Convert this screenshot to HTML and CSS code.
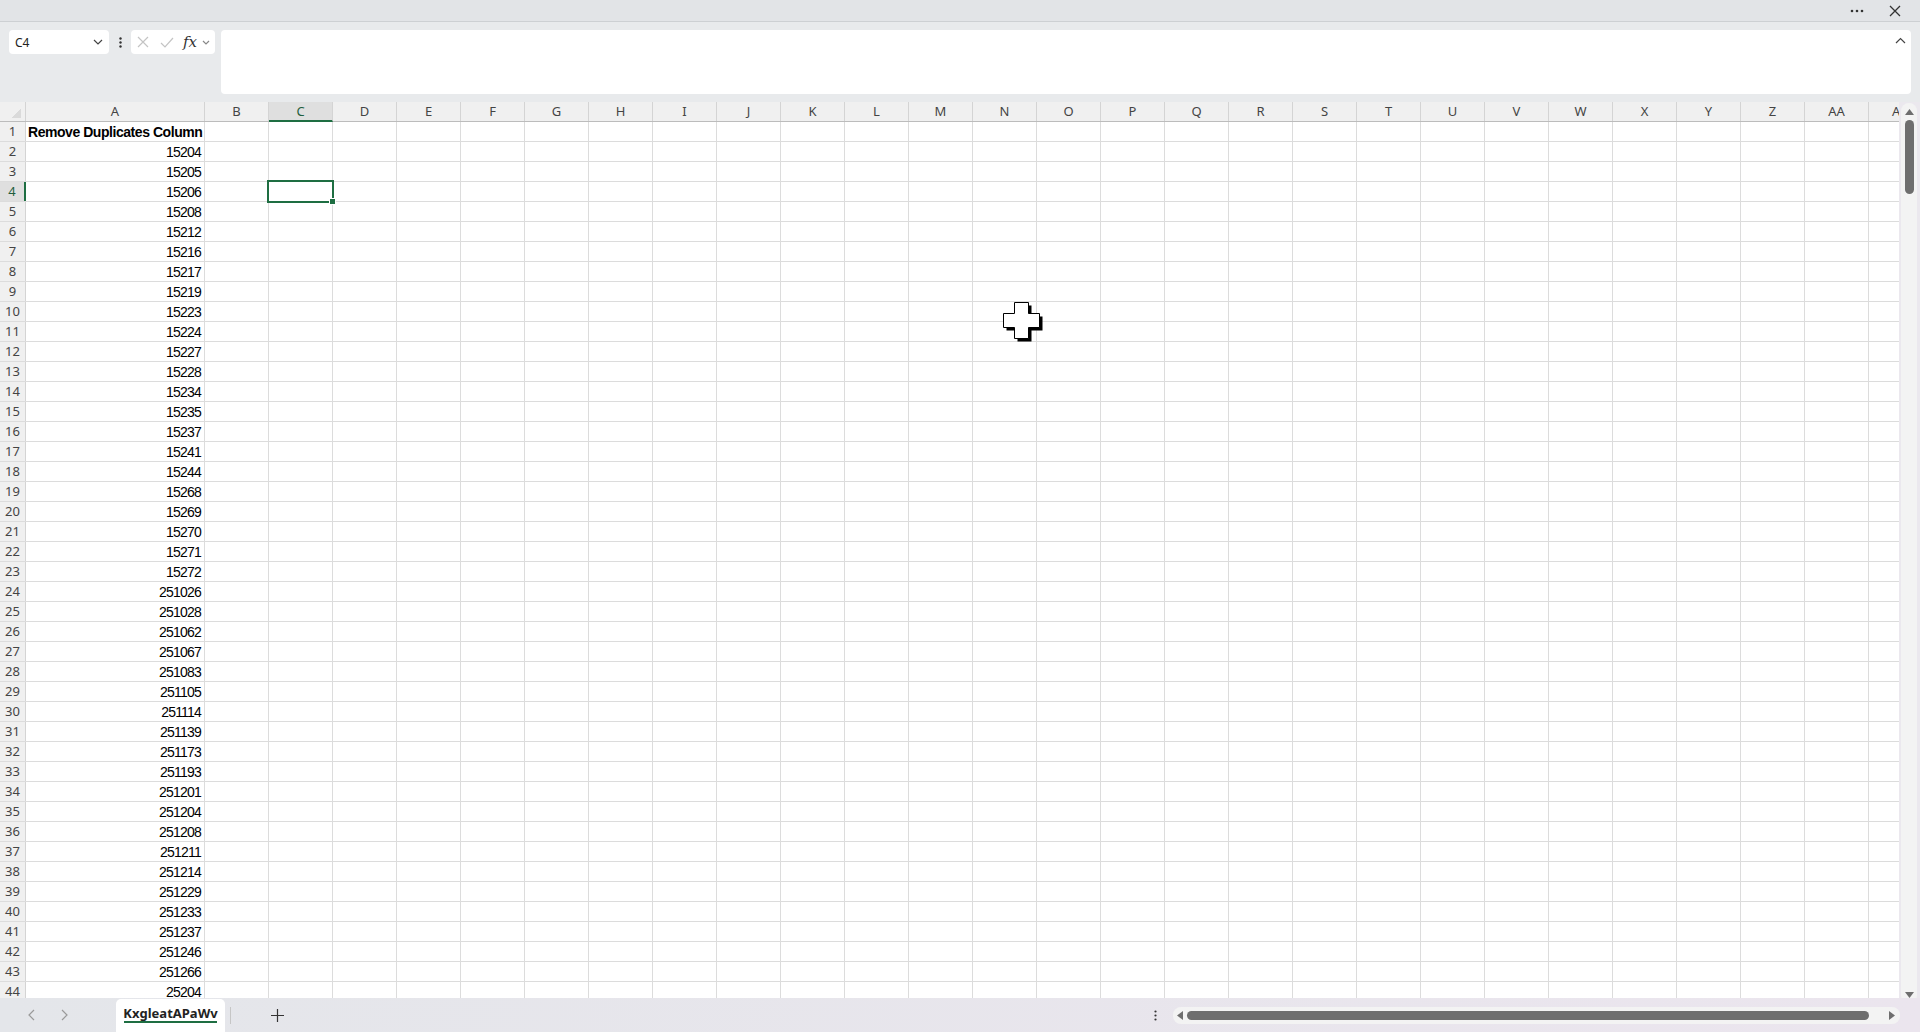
FILE: index.html
```html
<!DOCTYPE html>
<html lang="en">
<head>
  <meta charset="UTF-8" />
  <title>KxgleatAPaWv</title>
  <link rel="stylesheet" href="styles.css">
</head>
<body>
  <div class="app">
    <div class="titlebar">
      <svg class="more" width="14" height="4" viewBox="0 0 14 4"><circle cx="2" cy="2" r="1.3"/><circle cx="7" cy="2" r="1.3"/><circle cx="12" cy="2" r="1.3"/></svg>
      <svg class="close" width="12" height="12" viewBox="0 0 12 12"><path d="M1 1L11 11M11 1L1 11"/></svg>
    </div>

    <div class="formula-bar">
      <div class="name-box">
        <span>C4</span>
        <svg width="10" height="6" viewBox="0 0 10 6"><path d="M1 1L5 5L9 1"/></svg>
      </div>
      <div class="fdots">
        <svg width="3" height="11" viewBox="0 0 3 11"><circle cx="1.5" cy="1.5" r="1.2"/><circle cx="1.5" cy="5.5" r="1.2"/><circle cx="1.5" cy="9.5" r="1.2"/></svg>
      </div>
      <div class="edit-box">
        <svg class="dim cancel" width="12" height="12" viewBox="0 0 12 12"><path d="M1 1L11 11M11 1L1 11"/></svg>
        <svg class="dim enter" width="14" height="11" viewBox="0 0 14 11"><path d="M1 6L5 10L13 1"/></svg>
        <span class="fx">fx</span>
        <svg class="small-chev" width="8" height="5" viewBox="0 0 8 5"><path d="M1 1L4 4L7 1"/></svg>
      </div>
      <div class="formula-input">
        <svg width="11" height="7" viewBox="0 0 11 7"><path d="M1 6L5.5 1.5L10 6"/></svg>
      </div>
    </div>

    <div class="sheet-area">
      <div class="sheet">
        <div class="col-heads">
          <span class="corner"></span>
          <span class="ch col-a">A</span>
          <span class="ch">B</span>
          <span class="ch active">C</span>
          <span class="ch">D</span>
          <span class="ch">E</span>
          <span class="ch">F</span>
          <span class="ch">G</span>
          <span class="ch">H</span>
          <span class="ch">I</span>
          <span class="ch">J</span>
          <span class="ch">K</span>
          <span class="ch">L</span>
          <span class="ch">M</span>
          <span class="ch">N</span>
          <span class="ch">O</span>
          <span class="ch">P</span>
          <span class="ch">Q</span>
          <span class="ch">R</span>
          <span class="ch">S</span>
          <span class="ch">T</span>
          <span class="ch">U</span>
          <span class="ch">V</span>
          <span class="ch">W</span>
          <span class="ch">X</span>
          <span class="ch">Y</span>
          <span class="ch">Z</span>
          <span class="ch">AA</span>
          <span class="ch">AB</span>
        </div>
        <div class="rows">
          <div class="row"><span class="rh">1</span><span class="cell title">Remove Duplicates Column</span></div>
          <div class="row"><span class="rh">2</span><span class="cell">15204</span></div>
          <div class="row"><span class="rh">3</span><span class="cell">15205</span></div>
          <div class="row"><span class="rh active">4</span><span class="cell">15206</span></div>
          <div class="row"><span class="rh">5</span><span class="cell">15208</span></div>
          <div class="row"><span class="rh">6</span><span class="cell">15212</span></div>
          <div class="row"><span class="rh">7</span><span class="cell">15216</span></div>
          <div class="row"><span class="rh">8</span><span class="cell">15217</span></div>
          <div class="row"><span class="rh">9</span><span class="cell">15219</span></div>
          <div class="row"><span class="rh">10</span><span class="cell">15223</span></div>
          <div class="row"><span class="rh">11</span><span class="cell">15224</span></div>
          <div class="row"><span class="rh">12</span><span class="cell">15227</span></div>
          <div class="row"><span class="rh">13</span><span class="cell">15228</span></div>
          <div class="row"><span class="rh">14</span><span class="cell">15234</span></div>
          <div class="row"><span class="rh">15</span><span class="cell">15235</span></div>
          <div class="row"><span class="rh">16</span><span class="cell">15237</span></div>
          <div class="row"><span class="rh">17</span><span class="cell">15241</span></div>
          <div class="row"><span class="rh">18</span><span class="cell">15244</span></div>
          <div class="row"><span class="rh">19</span><span class="cell">15268</span></div>
          <div class="row"><span class="rh">20</span><span class="cell">15269</span></div>
          <div class="row"><span class="rh">21</span><span class="cell">15270</span></div>
          <div class="row"><span class="rh">22</span><span class="cell">15271</span></div>
          <div class="row"><span class="rh">23</span><span class="cell">15272</span></div>
          <div class="row"><span class="rh">24</span><span class="cell">251026</span></div>
          <div class="row"><span class="rh">25</span><span class="cell">251028</span></div>
          <div class="row"><span class="rh">26</span><span class="cell">251062</span></div>
          <div class="row"><span class="rh">27</span><span class="cell">251067</span></div>
          <div class="row"><span class="rh">28</span><span class="cell">251083</span></div>
          <div class="row"><span class="rh">29</span><span class="cell">251105</span></div>
          <div class="row"><span class="rh">30</span><span class="cell">251114</span></div>
          <div class="row"><span class="rh">31</span><span class="cell">251139</span></div>
          <div class="row"><span class="rh">32</span><span class="cell">251173</span></div>
          <div class="row"><span class="rh">33</span><span class="cell">251193</span></div>
          <div class="row"><span class="rh">34</span><span class="cell">251201</span></div>
          <div class="row"><span class="rh">35</span><span class="cell">251204</span></div>
          <div class="row"><span class="rh">36</span><span class="cell">251208</span></div>
          <div class="row"><span class="rh">37</span><span class="cell">251211</span></div>
          <div class="row"><span class="rh">38</span><span class="cell">251214</span></div>
          <div class="row"><span class="rh">39</span><span class="cell">251229</span></div>
          <div class="row"><span class="rh">40</span><span class="cell">251233</span></div>
          <div class="row"><span class="rh">41</span><span class="cell">251237</span></div>
          <div class="row"><span class="rh">42</span><span class="cell">251246</span></div>
          <div class="row"><span class="rh">43</span><span class="cell">251266</span></div>
          <div class="row"><span class="rh">44</span><span class="cell">25204</span></div>
        </div>

        <!-- active cell C4 -->
        <div class="selection"><span class="fill-handle"></span></div>

        <!-- mouse pointer -->
        <svg class="pointer" width="40" height="40" viewBox="0 0 40 40">
          <path class="shadow" d="M14.5 3.5H28.5V14.5H39.5V28.5H28.5V39.5H14.5V28.5H3.5V14.5H14.5Z"/>
          <path class="shape" d="M11.5 0.5H25.5V11.5H36.5V25.5H25.5V36.5H11.5V25.5H0.5V11.5H11.5Z"/>
        </svg>
      </div>

      <div class="vscroll">
        <div class="vtrack">
          <svg width="9" height="6" viewBox="0 0 9 6"><path d="M4.5 0L9 6H0Z"/></svg>
          <div class="vthumb"></div>
          <div class="vspace"></div>
          <svg width="9" height="6" viewBox="0 0 9 6"><path d="M0 0H9L4.5 6Z"/></svg>
        </div>
      </div>
    </div>

    <div class="statusbar">
      <div class="sheet-nav">
        <svg width="7" height="12" viewBox="0 0 7 12"><path d="M6 1L1 6L6 11"/></svg>
        <svg width="7" height="12" viewBox="0 0 7 12"><path d="M1 1L6 6L1 11"/></svg>
      </div>
      <div class="tab">KxgleatAPaWv</div>
      <span class="tab-sep"></span>
      <svg class="add" width="13" height="13" viewBox="0 0 13 13"><path d="M6.5 0V13M0 6.5H13"/></svg>
      <div class="spacer"></div>
      <svg class="hdots" width="3" height="11" viewBox="0 0 3 11"><circle cx="1.5" cy="1.5" r="1.1"/><circle cx="1.5" cy="5.5" r="1.1"/><circle cx="1.5" cy="9.5" r="1.1"/></svg>
      <div class="htrack">
        <svg width="6" height="9" viewBox="0 0 6 9"><path d="M6 0V9L0 4.5Z"/></svg>
        <div class="hthumb"></div>
        <svg width="6" height="9" viewBox="0 0 6 9"><path d="M0 0L6 4.5L0 9Z"/></svg>
      </div>
    </div>
  </div>
</body>
</html>
```

FILE: styles.css
```css
body {
  margin: 0;
  font-family: 'Noto Sans', 'Open Sans', sans-serif;
  background: #e8eaec;
  overflow: hidden;
}

.app {
  position: relative;
  width: 1920px;
  height: 1032px;
  display: flex;
  flex-direction: column;
}

/* title strip */
.titlebar {
  height: 22px;
  box-sizing: border-box;
  background: #e2e4e7;
  border-bottom: 1px solid #cdd0d3;
  display: flex;
  align-items: center;
  justify-content: flex-end;
  padding-right: 19px;
  gap: 25px;
}

.titlebar .more { fill: #333; }
.titlebar .close path { stroke: #333; stroke-width: 1.3; fill: none; }

/* formula bar */
.formula-bar {
  height: 80px;
  box-sizing: border-box;
  background: #e8eaec;
  display: flex;
  align-items: flex-start;
  padding: 8px 9px 0 9px;
}

.name-box {
  width: 100px;
  height: 24px;
  box-sizing: border-box;
  background: #fff;
  border-radius: 4px;
  display: flex;
  align-items: center;
  justify-content: space-between;
  padding: 0 6px 0 6px;
  font-size: 12px;
  color: #222;
}

.name-box path,
.small-chev path,
.formula-input path {
  stroke: #444;
  stroke-width: 1.2;
  fill: none;
}

.fdots {
  width: 22px;
  height: 24px;
  display: flex;
  align-items: center;
  justify-content: center;
}

.fdots svg, .hdots { fill: #333; }

.edit-box {
  width: 84px;
  height: 24px;
  box-sizing: border-box;
  background: #fff;
  border-radius: 4px;
  display: flex;
  align-items: center;
  padding-left: 6px;
}

.edit-box .dim path {
  stroke: #c4c4c4;
  stroke-width: 1.2;
  fill: none;
}

.edit-box .enter { margin-left: 11px; }

.edit-box .fx {
  font-family: 'DejaVu Serif', 'Liberation Serif', serif;
  font-style: italic;
  font-size: 15px;
  line-height: 24px;
  color: #333;
  margin-left: 9px;
  width: 16px;
}

.small-chev { margin-left: 3px; }
.small-chev path { stroke: #888; }

.formula-input {
  flex: 1;
  height: 64px;
  margin-left: 6px;
  background: #fff;
  border-radius: 4px;
  display: flex;
  justify-content: flex-end;
  padding: 7px 5px 0 0;
  box-sizing: border-box;
}

/* grid */
.sheet-area {
  height: 896px;
  display: flex;
  background: #ebe8ee;
}

.sheet {
  width: 1899px;
  overflow: hidden;
  background: #fff;
}

.col-heads {
  display: flex;
  height: 20px;
  box-sizing: border-box;
  background: #f0f0f0;
  border-bottom: 1px solid #bcbcbc;
  font-size: 13px;
  color: #444;
}

.corner {
  flex: none;
  width: 26px;
  box-sizing: border-box;
  border-right: 1px solid #d4d4d4;
  background: linear-gradient(135deg, transparent 60%, #dadada 60%) no-repeat 8px 4px / 13px 12px;
}

.ch {
  flex: none;
  width: 64px;
  box-sizing: border-box;
  border-right: 1px solid #d4d4d4;
  text-align: center;
  line-height: 19px;
}

.ch.col-a { width: 179px; }

.ch.active {
  background: #dfdfdf;
  color: #1f5e3d;
  border-bottom: 2px solid #1e6e42;
  height: 20px;
}

.rows {
  background: #fff repeating-linear-gradient(to right, transparent 0 63px, #dcdcdc 63px 64px) 205px 0;
}

.row {
  display: flex;
  height: 20px;
  box-sizing: border-box;
  border-bottom: 1px solid #dcdcdc;
}

.rh {
  flex: none;
  width: 26px;
  box-sizing: border-box;
  background: #f0f0f0;
  border-right: 1px solid #d4d4d4;
  text-align: center;
  font-size: 13px;
  line-height: 19px;
  color: #444;
}

.rh.active {
  background: #dfdfdf;
  color: #1f5e3d;
  border-right: 2px solid #1e6e42;
}

.cell {
  flex: none;
  width: 179px;
  box-sizing: border-box;
  background: #fff;
  border-right: 1px solid #dcdcdc;
  padding: 0 3px 0 2px;
  text-align: right;
  font-family: 'Liberation Sans', Arial, sans-serif;
  font-size: 14px;
  letter-spacing: -0.8px;
  line-height: 20px;
  color: #000;
  white-space: nowrap;
  overflow: hidden;
}

.cell.title {
  text-align: left;
  font-weight: bold;
  letter-spacing: -0.45px;
}

.selection {
  position: absolute;
  left: 267px;
  top: 180px;
  width: 67px;
  height: 23px;
  box-sizing: border-box;
  border: 2px solid #1e6e42;
}

.fill-handle {
  position: absolute;
  right: -4px;
  bottom: -4px;
  width: 5px;
  height: 5px;
  background: #1e6e42;
  border: 1px solid #fff;
}

.pointer {
  position: absolute;
  left: 1003px;
  top: 302px;
}

.pointer .shadow { fill: #000; }
.pointer .shape { fill: #fff; stroke: #000; stroke-width: 1; }

/* vertical scroll */
.vscroll {
  flex: 1;
  padding: 1px 3px 0 2px;
}

.vtrack {
  height: 900px;
  background: #f3f3f3;
  border-radius: 8px;
  display: flex;
  flex-direction: column;
  align-items: center;
  padding: 6px 0 5px;
  box-sizing: border-box;
}

.vtrack svg { fill: #6e6e6e; flex: none; }

.vthumb {
  width: 9px;
  height: 74px;
  margin-top: 5px;
  background: #6e6e6e;
  border-radius: 5px;
}

.vspace { flex: 1; }

/* sheet tabs + horizontal scroll */
.statusbar {
  position: relative;
  height: 34px;
  display: flex;
  align-items: center;
  background: linear-gradient(to right, #e4e6ea, #ebe5ee);
}

.sheet-nav {
  width: 116px;
  display: flex;
  gap: 26px;
  padding-left: 28px;
  box-sizing: border-box;
}

.sheet-nav path {
  stroke: #9a9a9a;
  stroke-width: 1.2;
  fill: none;
}

.tab {
  align-self: flex-end;
  width: 109px;
  height: 33px;
  box-sizing: border-box;
  background: #fff;
  border-radius: 5px 5px 0 0;
  text-align: center;
  font-size: 13px;
  font-weight: bold;
  color: #222;
  line-height: 28px;
  position: relative;
}

.tab::after {
  content: "";
  position: absolute;
  left: 8px;
  right: 8px;
  bottom: 9px;
  height: 2px;
  background: #1e6e42;
}

.tab-sep {
  width: 1px;
  height: 17px;
  background: #c6c6c6;
  margin-left: 5px;
}

.add {
  margin-left: 40px;
}

.add path { stroke: #333; stroke-width: 1.2; }

.spacer { flex: 1; }

.hdots { margin-right: 16px; }

.htrack {
  width: 727px;
  height: 17px;
  margin-right: 20px;
  background: #f3f3f3;
  border-radius: 8px;
  display: flex;
  align-items: center;
  padding: 0 5px 0 4px;
  box-sizing: border-box;
  gap: 4px;
}

.htrack svg { fill: #6e6e6e; flex: none; }

.hthumb {
  width: 682px;
  height: 9px;
  background: #6e6e6e;
  border-radius: 5px;
  margin-right: auto;
}
```
